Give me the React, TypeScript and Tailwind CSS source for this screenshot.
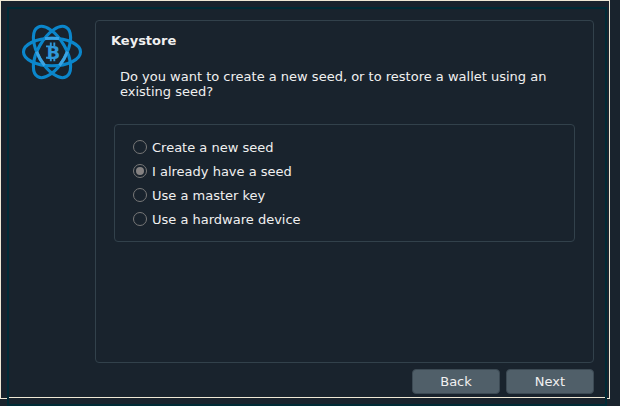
import React from "react";

function Logo() {
  return (
    <svg width="62" height="58" viewBox="-31 -29 62 58" className="block" fill="none">
      <g stroke="#0b86cb" strokeWidth="3.1">
        <ellipse rx="28.5" ry="13.8" />
        <ellipse rx="28.5" ry="13.8" transform="rotate(60)" />
        <ellipse rx="28.5" ry="13.8" transform="rotate(120)" />
      </g>
      <g stroke="#3ba3e2" strokeWidth="3">
        <path d="M-7 -13.4Q0 -14.2 7 -13.4" />
        <path d="M-8 -13.2Q0 -14.4 8 -13.2" transform="rotate(120)" />
        <path d="M-8 -13.2Q0 -14.4 8 -13.2" transform="rotate(240)" />
      </g>
      <path
        d="M-1.2 -9.5V-6M2.3 -9.5V-6M-1.2 6V9.3M2.3 6V9.3M-6 -5.6H-2M-6 5.8H-2"
        stroke="#2f97d8"
        strokeWidth="1.9"
      />
      <text
        x="1.3"
        y="6.7"
        textAnchor="middle"
        fill="#2f97d8"
        className="font-['DejaVu_Sans',sans-serif] text-[18px] font-bold"
      >
        B
      </text>
    </svg>
  );
}

function Choice({ label, checked = false }: { label: string; checked?: boolean }) {
  return (
    <label className="flex h-6 items-center gap-[5px]">
      <span className="flex size-[14px] items-center justify-center rounded-full border border-[#787878]">
        {checked && <span className="size-2 rounded-full bg-[#858282]" />}
      </span>
      <span className="whitespace-nowrap">{label}</span>
    </label>
  );
}

function WizardButton({ children }: { children: React.ReactNode }) {
  return (
    <button className="flex h-[25px] w-[88px] items-center justify-center rounded border border-[#3c4a54] bg-[#505f69]">
      {children}
    </button>
  );
}

export default function App() {
  return (
    <div className="relative h-[406px] w-[620px] overflow-hidden bg-[#19232d] font-['DejaVu_Sans',sans-serif] text-[13px] leading-[15px] text-[#f0f0f0]">
      <div className="absolute top-0 left-0 h-[399px] w-[610px] border border-[#eee8d5]" />
      <div className="absolute top-[7px] left-[7px] h-[399px] w-[600px] border-2 border-[#002b36] bg-[#19232d]">
        <div className="flex h-[389px] border-b border-[#eee8d5]">
          <aside className="w-[86px] pt-[14px] pl-3">
            <Logo />
          </aside>
          <main className="w-[499px] pt-[11px]">
            <section className="h-[343px] rounded border border-[#32414b]">
              <h1 className="pt-3 pl-[15px] font-bold">Keystore</h1>
              <p className="mt-[21px] ml-6 w-[450px]">
                Do you want to create a new seed, or to restore a wallet using an
                <br />
                existing seed?
              </p>
              <div className="mt-[25px] ml-[18px] h-[118px] w-[461px] rounded border border-[#32414b] pt-[10px] pl-[18px]">
                <Choice label="Create a new seed" />
                <Choice label="I already have a seed" checked />
                <Choice label="Use a master key" />
                <Choice label="Use a hardware device" />
              </div>
            </section>
            <footer className="mt-1.5 flex justify-end gap-1.5">
              <WizardButton>Back</WizardButton>
              <WizardButton>Next</WizardButton>
            </footer>
          </main>
        </div>
      </div>
    </div>
  );
}
